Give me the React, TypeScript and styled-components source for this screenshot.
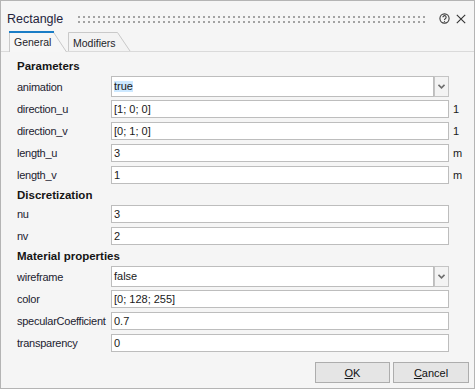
import React from "react";
import styled, { createGlobalStyle } from "styled-components";

const Global = createGlobalStyle`
  html, body { margin: 0; padding: 0; background: #ffffff; }
  body { font-family: "Liberation Sans", Arial, sans-serif; }
`;

const Window = styled.div`
  box-sizing: border-box;
  width: 475px;
  height: 389px;
  border: 1px solid #b4b4b4;
  background: #f5f5f5;
  display: flex;
  flex-direction: column;
  font-family: "Liberation Sans", Arial, sans-serif;
  font-size: 11px;
  color: #222;
`;

const TitleBar = styled.div`
  height: 30px;
  display: flex;
  align-items: flex-start;
  padding-left: 6px;
  padding-right: 8px;
`;

const Title = styled.div`
  margin-top: 11px;
  font-size: 12.5px;
  line-height: 15px;
  color: #24243c;
`;

const Grip = styled.svg`
  flex: 1;
  height: 7px;
  margin: 15px 12px 0 15px;
  display: block;
`;

const Icons = styled.div`
  display: flex;
  gap: 6px;
  margin-top: 12px;
  align-items: center;
`;

const IconSvg = styled.svg`
  display: block;
`;

const TabBar = styled.div`
  height: 20px;
  display: flex;
  align-items: flex-end;
  padding-left: 8px;
  border-bottom: 1px solid #dadada;
`;

const Tab = styled.div<{ $w: number; $h: number; $gap: number }>`
  position: relative;
  flex: none;
  box-sizing: border-box;
  width: ${(p) => p.$w}px;
  height: ${(p) => p.$h}px;
  margin-left: ${(p) => p.$gap}px;
  margin-bottom: ${(p) => (p.$h > 20 ? -1 : 0)}px;
  padding: 5px 0 0 5px;
  font-size: 10.5px;
  line-height: 12px;
  color: #1e1e2a;
`;

const TabShape = styled.svg`
  position: absolute;
  left: 0;
  top: 0;
  overflow: visible;
`;

const TabLabel = styled.span`
  position: relative;
`;

const Panel = styled.div`
  flex: 1;
  display: flex;
  flex-direction: column;
  padding-top: 6px;
`;

const Heading = styled.div<{ $first?: boolean }>`
  height: 17px;
  line-height: 17px;
  margin-top: ${(p) => (p.$first ? 0 : -1)}px;
  margin-bottom: 1px;
  padding-left: 16px;
  font-weight: bold;
  font-size: 11.5px;
  color: #151515;
`;

const Row = styled.div<{ $h: number; $mb: number }>`
  display: grid;
  grid-template-columns: 94px 338px 1fr;
  align-items: center;
  height: ${(p) => p.$h}px;
  margin-bottom: ${(p) => p.$mb}px;
  padding-left: 16px;
`;

const Label = styled.div`
  font-size: 11px;
  letter-spacing: -0.25px;
  color: #222230;
  white-space: nowrap;
`;

const TextBox = styled.div`
  box-sizing: border-box;
  height: 100%;
  border: 1px solid #bdbdbd;
  background: #ffffff;
  padding-left: 2px;
  display: flex;
  align-items: center;
  font-size: 11px;
  color: #1a1a1a;
  white-space: nowrap;
`;

const Combo = styled.div`
  display: flex;
  height: 100%;
`;

const ComboText = styled(TextBox)`
  width: 323px;
`;

const ComboValue = styled.span<{ $selected?: boolean }>`
  background: ${(p) => (p.$selected ? "#cce8ff" : "transparent")};
  line-height: 11px;
`;

const DropButton = styled.div`
  box-sizing: border-box;
  width: 15px;
  height: 100%;
  border: 1px solid #c4c4c4;
  background: #f3f3f3;
  display: flex;
  align-items: center;
  justify-content: center;
`;

const Unit = styled.div`
  padding-left: 4px;
  font-size: 11px;
  color: #1a1a1a;
`;

const Footer = styled.div`
  margin-top: auto;
  display: flex;
  justify-content: flex-end;
  gap: 3px;
  padding: 0 5px 5px 0;
`;

const Button = styled.div<{ $w: number }>`
  box-sizing: border-box;
  width: ${(p) => p.$w}px;
  height: 21px;
  border: 1px solid #adadad;
  background: #e5e5e5;
  display: flex;
  align-items: center;
  justify-content: center;
  font-size: 11px;
  color: #111;
`;

const Key = styled.span`
  text-decoration: underline;
`;

const Chevron = () => (
  <svg width="7" height="5" viewBox="0 0 7 5">
    <path d="M0.5 0.8 L3.5 3.8 L6.5 0.8" fill="none" stroke="#6e6e6e" strokeWidth="1.6" />
  </svg>
);

type Field =
  | { kind: "combo"; label: string; value: string; selected?: boolean }
  | { kind: "text"; label: string; value: string; unit?: string };

const sections: { title: string; fields: Field[] }[] = [
  {
    title: "Parameters",
    fields: [
      { kind: "combo", label: "animation", value: "true", selected: true },
      { kind: "text", label: "direction_u", value: "[1; 0; 0]", unit: "1" },
      { kind: "text", label: "direction_v", value: "[0; 1; 0]", unit: "1" },
      { kind: "text", label: "length_u", value: "3", unit: "m" },
      { kind: "text", label: "length_v", value: "1", unit: "m" },
    ],
  },
  {
    title: "Discretization",
    fields: [
      { kind: "text", label: "nu", value: "3" },
      { kind: "text", label: "nv", value: "2" },
    ],
  },
  {
    title: "Material properties",
    fields: [
      { kind: "combo", label: "wireframe", value: "false" },
      { kind: "text", label: "color", value: "[0; 128; 255]" },
      { kind: "text", label: "specularCoefficient", value: "0.7" },
      { kind: "text", label: "transparency", value: "0" },
    ],
  },
];

export default function App() {
  return (
    <>
      <Global />
      <Window>
        <TitleBar>
          <Title>Rectangle</Title>
          <Grip>
            <defs>
              <pattern id="grip" width="5" height="5" patternUnits="userSpaceOnUse">
                <rect x="0" y="0" width="2" height="2" fill="#a3a3a3" />
              </pattern>
            </defs>
            <rect x="0" y="0" width="100%" height="7" fill="url(#grip)" />
          </Grip>
          <Icons>
            <IconSvg width="11" height="11" viewBox="0 0 11 11">
              <circle cx="5.5" cy="5.5" r="4.6" fill="none" stroke="#3c3c3c" strokeWidth="1.1" />
              <path
                d="M3.9 4.3 A1.6 1.6 0 1 1 6.4 5.6 C5.8 6 5.5 6.2 5.5 6.9"
                fill="none"
                stroke="#3c3c3c"
                strokeWidth="1.1"
              />
              <circle cx="5.5" cy="8.3" r="0.6" fill="#3c3c3c" />
            </IconSvg>
            <IconSvg width="10" height="10" viewBox="0 0 10 10">
              <path d="M0.8 0.8 L9.2 9.2 M9.2 0.8 L0.8 9.2" stroke="#333" strokeWidth="1.1" />
            </IconSvg>
          </Icons>
        </TitleBar>
        <TabBar>
          <Tab $w={58} $h={21} $gap={0}>
            <TabShape width="58" height="21">
              <path d="M0 0 H44.5 L57.5 21 H0 Z" fill="#f6f6f6" />
              <line x1="0.5" y1="0" x2="0.5" y2="21" stroke="#c9c9c9" />
              <line x1="44" y1="0.5" x2="57.5" y2="21" stroke="#c9c9c9" />
              <rect x="0" y="0" width="45" height="2" fill="#1a7dc6" />
            </TabShape>
            <TabLabel>General</TabLabel>
          </Tab>
          <Tab $w={63} $h={19} $gap={1}>
            <TabShape width="63" height="19">
              <path d="M0.5 19 V0.5 H49.5 L62 19" fill="#f3f3f3" stroke="#c9c9c9" />
            </TabShape>
            <TabLabel>Modifiers</TabLabel>
          </Tab>
        </TabBar>
        <Panel>
          {sections.map((s, si) => (
            <React.Fragment key={s.title}>
              <Heading $first={si === 0}>{s.title}</Heading>
              {s.fields.map((f) =>
                f.kind === "combo" ? (
                  <Row key={f.label} $h={21} $mb={3}>
                    <Label>{f.label}</Label>
                    <Combo>
                      <ComboText>
                        <ComboValue $selected={f.selected}>{f.value}</ComboValue>
                      </ComboText>
                      <DropButton>
                        <Chevron />
                      </DropButton>
                    </Combo>
                  </Row>
                ) : (
                  <Row key={f.label} $h={18} $mb={4}>
                    <Label>{f.label}</Label>
                    <TextBox>{f.value}</TextBox>
                    <Unit>{f.unit ?? ""}</Unit>
                  </Row>
                )
              )}
            </React.Fragment>
          ))}
          <Footer>
            <Button $w={75}>
              <span>
                <Key>O</Key>K
              </span>
            </Button>
            <Button $w={76}>
              <span>
                <Key>C</Key>ancel
              </span>
            </Button>
          </Footer>
        </Panel>
      </Window>
    </>
  );
}
